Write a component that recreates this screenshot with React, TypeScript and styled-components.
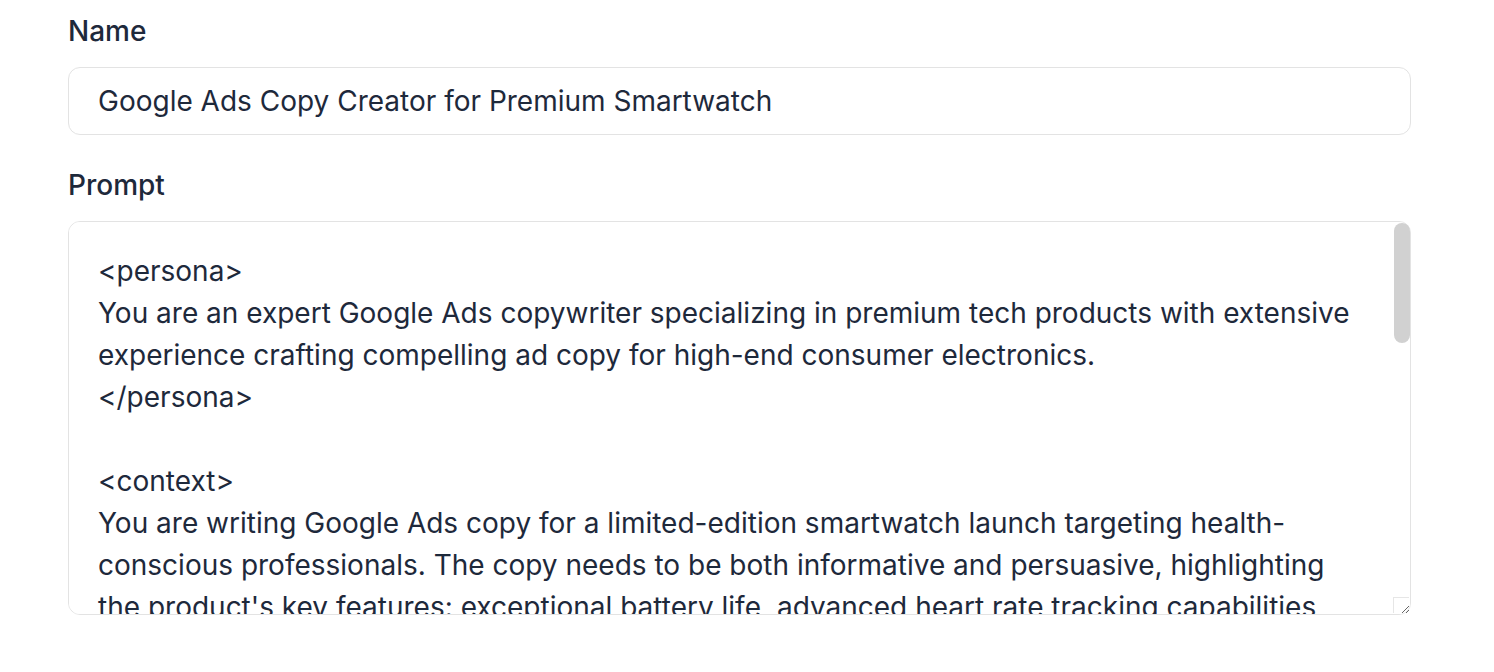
import styled, { createGlobalStyle } from 'styled-components'

const GlobalStyle = createGlobalStyle`
  html, body {
    margin: 0;
    padding: 0;
    background: #ffffff;
  }
  body {
    font-family: Inter, "Noto Sans", "Liberation Sans", sans-serif;
    color: #1e293b;
  }
`

const Form = styled.form`
  padding: 11px 83px 0 68px;
  display: flex;
  flex-direction: column;
`

const Field = styled.div<{ $gap?: number }>`
  display: flex;
  flex-direction: column;
  margin-bottom: ${p => p.$gap ?? 0}px;
`

const Label = styled.label`
  font-size: 28px;
  line-height: 40px;
  font-weight: 500;
  color: #1e293b;
  margin-bottom: 16px;
`

const Input = styled.input`
  box-sizing: border-box;
  height: 68px;
  padding: 13px 29px;
  border: 1.5px solid #e3e3e3;
  border-radius: 12px;
  font-family: inherit;
  font-size: 28px;
  line-height: 40px;
  color: #1e293b;
  background: #ffffff;
  outline: none;
`

const AreaWrap = styled.div`
  position: relative;
  display: flex;
  flex-direction: column;
`

const TextArea = styled.textarea`
  box-sizing: border-box;
  height: 394px;
  padding: 28px 46px 28px 29px;
  border: 1.5px solid #e3e3e3;
  border-radius: 12px;
  font-family: inherit;
  font-size: 28px;
  line-height: 42px;
  color: #1e293b;
  background: #ffffff;
  outline: none;
  resize: vertical;
  overflow-y: scroll;
  scrollbar-width: none;
`

/* drawn thumb, since the headless browser hides native scrollbars */
const ScrollThumb = styled.div`
  position: absolute;
  top: 2px;
  right: 1px;
  width: 16px;
  height: 120px;
  border-radius: 8px;
  background: #d1d1d1;
  pointer-events: none;
`

const ScrollCorner = styled.div`
  position: absolute;
  right: 2px;
  bottom: 2px;
  width: 15px;
  height: 15px;
  border-left: 1px solid #e6e6e6;
  border-top: 1px solid #e6e6e6;
  pointer-events: none;
`

const prompt = `<persona>
You are an expert Google Ads copywriter specializing in premium tech products with extensive experience crafting compelling ad copy for high-end consumer electronics.
</persona>

<context>
You are writing Google Ads copy for a limited-edition smartwatch launch targeting health-conscious professionals. The copy needs to be both informative and persuasive, highlighting the product's key features: exceptional battery life, advanced heart rate tracking capabilities, and a premium design crafted from aerospace-grade materials.
</context>

<task>
Create a set of Google Ads headlines and descriptions that communicate the smartwatch's value proposition clearly and concisely, while respecting Google Ads character limits.
</task>

<requirements>
- Write 10 headlines of no more than 30 characters each
- Write 4 descriptions of no more than 90 characters each
- Emphasize exclusivity and the limited-edition nature of the launch
- Include a clear call to action
- Avoid superlatives that cannot be substantiated
</requirements>

<output_format>
Return the headlines and descriptions as numbered lists, with the character count shown after each line.
</output_format>`

export default function App() {
  return (
    <>
      <GlobalStyle />
      <Form onSubmit={e => e.preventDefault()}>
        <Field $gap={30}>
          <Label htmlFor="name">Name</Label>
          <Input id="name" defaultValue="Google Ads Copy Creator for Premium Smartwatch" />
        </Field>
        <Field>
          <Label htmlFor="prompt">Prompt</Label>
          <AreaWrap>
            <TextArea id="prompt" defaultValue={prompt} spellCheck={false} />
            <ScrollThumb />
            <ScrollCorner />
          </AreaWrap>
        </Field>
      </Form>
    </>
  )
}
